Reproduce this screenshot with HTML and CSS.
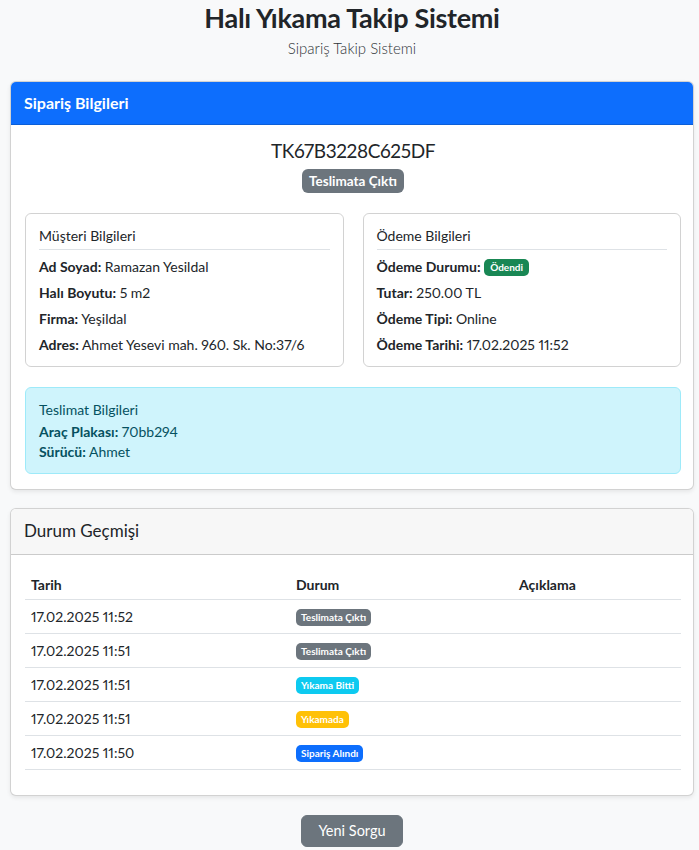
FILE: index.html
```html
<!DOCTYPE html>
<html lang="tr">

<head>
    <meta charset="utf-8">
    <title>Halı Yıkama Takip Sistemi</title>
    <link rel="stylesheet" href="styles.css">
</head>

<body>
    <div class="container">
        <div class="page-head">
            <h1>Halı Yıkama Takip Sistemi</h1>
            <p class="lead">Sipariş Takip Sistemi</p>
        </div>

        <div class="card card-main">
            <div class="card-header header-primary">Sipariş Bilgileri</div>
            <div class="card-body">
                <div class="order-no">TK67B3228C625DF</div>
                <div class="order-status">
                    <span class="badge badge-lg bg-secondary">Teslimata Çıktı</span>
                </div>

                <div class="info-row">
                    <div class="info-box">
                        <div class="info-title">Müşteri Bilgileri</div>
                        <p><b>Ad Soyad:</b> Ramazan Yesildal</p>
                        <p><b>Halı Boyutu:</b> 5 m2</p>
                        <p><b>Firma:</b> Yeşildal</p>
                        <p><b>Adres:</b> Ahmet Yesevi mah. 960. Sk. No:37/6</p>
                    </div>
                    <div class="info-box">
                        <div class="info-title">Ödeme Bilgileri</div>
                        <p><b>Ödeme Durumu:</b> <span class="badge bg-success">Ödendi</span></p>
                        <p><b>Tutar:</b> 250.00 TL</p>
                        <p><b>Ödeme Tipi:</b> Online</p>
                        <p><b>Ödeme Tarihi:</b> 17.02.2025 11:52</p>
                    </div>
                </div>

                <div class="alert-info">
                    <div class="alert-title">Teslimat Bilgileri</div>
                    <div class="alert-line"><b>Araç Plakası:</b> 70bb294</div>
                    <div class="alert-line"><b>Sürücü:</b> Ahmet</div>
                </div>
            </div>
        </div>

        <div class="card card-history">
            <div class="card-header header-light">Durum Geçmişi</div>
            <div class="card-body">
                <table class="history">
                    <thead>
                        <tr>
                            <th class="col-date">Tarih</th>
                            <th class="col-status">Durum</th>
                            <th>Açıklama</th>
                        </tr>
                    </thead>
                    <tbody>
                        <tr>
                            <td>17.02.2025 11:52</td>
                            <td><span class="badge bg-secondary">Teslimata Çıktı</span></td>
                            <td></td>
                        </tr>
                        <tr>
                            <td>17.02.2025 11:51</td>
                            <td><span class="badge bg-secondary">Teslimata Çıktı</span></td>
                            <td></td>
                        </tr>
                        <tr>
                            <td>17.02.2025 11:51</td>
                            <td><span class="badge bg-info">Yıkama Bitti</span></td>
                            <td></td>
                        </tr>
                        <tr>
                            <td>17.02.2025 11:51</td>
                            <td><span class="badge bg-warning">Yıkamada</span></td>
                            <td></td>
                        </tr>
                        <tr>
                            <td>17.02.2025 11:50</td>
                            <td><span class="badge bg-primary">Sipariş Alındı</span></td>
                            <td></td>
                        </tr>
                    </tbody>
                </table>
            </div>
        </div>

        <div class="actions">
            <button class="btn">Yeni Sorgu</button>
        </div>
    </div>
</body>

</html>
```

FILE: styles.css
```css
body {
    margin: 0;
    background-color: #f8f9fa;
    color: #212529;
    font-family: Lato, "Noto Sans", Arial, sans-serif;
    font-size: 14px;
    line-height: 1.5;
    font-variant-numeric: proportional-nums;
}

.container {
    padding: 0 5px 4px 10px;
}

/* page title */
.page-head {
    text-align: center;
    margin-bottom: 21px;
}

.page-head h1 {
    margin: 0;
    font-size: 27px;
    font-weight: 700;
    letter-spacing: -0.3px;
    line-height: 36px;
}

.lead {
    margin: 0;
    font-size: 15px;
    font-weight: 300;
    line-height: 24px;
    color: #2f3438;
}

/* cards */
.card {
    background-color: #fff;
    border: 1px solid rgba(0, 0, 0, .175);
    border-radius: 6px;
    box-shadow: 0 2px 4px rgba(0, 0, 0, .075);
    overflow: hidden;
}

.card-history {
    margin-top: 18px;
}

.card-header {
    padding: 9px 13px;
    font-size: 16px;
    line-height: 24px;
}

.header-primary {
    background-color: #0d6efd;
    color: #fff;
    font-weight: 700;
    border-bottom: 1px solid #0b5ed7;
}

.header-light {
    padding: 10px 13px 11px;
    background-color: #f7f7f7;
    border-bottom: 1px solid rgba(0, 0, 0, .175);
    font-size: 17px;
    font-weight: 400;
}

.card-body {
    padding: 14px 12px 15px 14px;
}

.order-no {
    text-align: center;
    font-size: 19px;
    font-weight: 400;
    letter-spacing: -0.4px;
    line-height: 24px;
}

.order-status {
    text-align: center;
    margin-top: 5px;
    line-height: 24px;
}

/* badges */
.badge {
    display: inline-block;
    padding: 2px 5px;
    border-radius: 5px;
    color: #fff;
    font-size: 10px;
    font-weight: 700;
    line-height: 13px;
    vertical-align: 1px;
    white-space: nowrap;
}

.badge-lg {
    padding: 4px 7px;
    font-size: 13.5px;
    line-height: 16px;
    border-radius: 6px;
    vertical-align: middle;
}

.bg-secondary {
    background-color: #6c757d;
}

.bg-success {
    background-color: #198754;
    padding: 2px 6px;
}

.bg-info {
    background-color: #0dcaf0;
}

.bg-warning {
    background-color: #ffc107;
}

.bg-primary {
    background-color: #0d6efd;
}

/* customer and payment boxes */
.info-row {
    display: grid;
    grid-template-columns: 1fr 1fr;
    gap: 19px;
    margin-top: 20px;
}

.info-box {
    border: 1px solid rgba(0, 0, 0, .175);
    border-radius: 6px;
    padding: 11px 13px 11px;
}

.info-title {
    font-size: 14px;
    font-weight: 400;
    padding-bottom: 3px;
    border-bottom: 1px solid #dee2e6;
    margin-bottom: 6px;
}

.info-box p {
    margin: 0 0 5px;
    line-height: 21px;
}

.info-box p:last-child {
    margin-bottom: 0;
}

.info-box b {
    font-weight: 700;
}

/* delivery */
.alert-info {
    margin-top: 20px;
    padding: 11px 13px 12px;
    background-color: #cff4fc;
    border: 1px solid #9eeaf9;
    border-radius: 6px;
    color: #055160;
}

.alert-title {
    font-size: 14px;
    font-weight: 400;
    line-height: 21px;
    margin-bottom: 2px;
}

.alert-line {
    line-height: 19.5px;
}

/* status history */
.history {
    width: 100%;
    border-collapse: collapse;
    margin-bottom: 10px;
    text-align: left;
}

.history th {
    padding: 5px 6px 4px;
    font-weight: 700;
    line-height: 21px;
    border-bottom: 1px solid #dee2e6;
}

.history td {
    padding: 6px 6px;
    line-height: 21px;
    border-bottom: 1px solid #dee2e6;
}

.col-date {
    width: 40.4%;
}

.col-status {
    width: 34%;
}

.actions {
    text-align: center;
    margin-top: 19px;
}

.btn {
    padding: 4px 16px;
    border: 1px solid #6c757d;
    border-radius: 6px;
    background-color: #6c757d;
    color: #fff;
    font-family: inherit;
    font-size: 14.5px;
    line-height: 22px;
}
```
